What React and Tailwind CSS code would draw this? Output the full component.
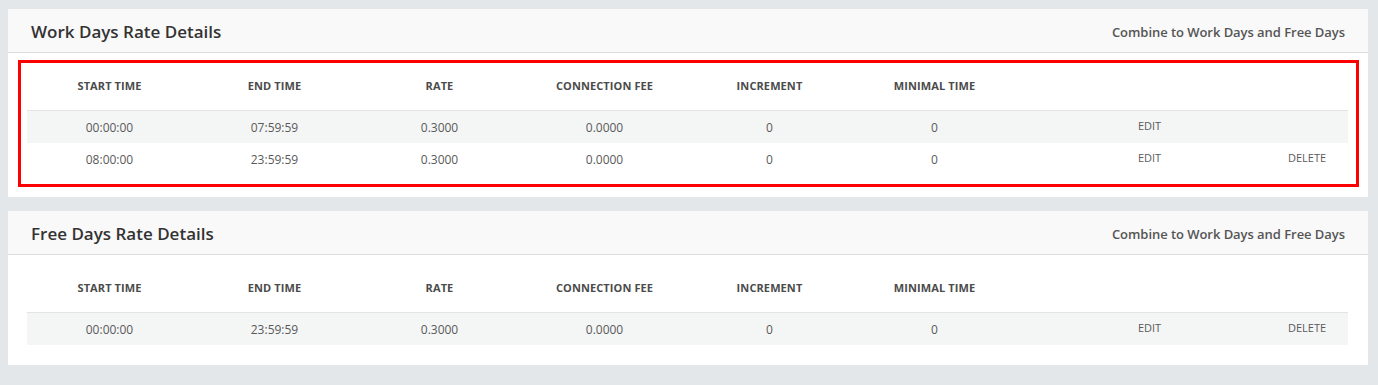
import React from "react";

const cols = ["START TIME", "END TIME", "RATE", "CONNECTION FEE", "INCREMENT", "MINIMAL TIME"];

function Table({ rows }) {
  return (
    <div className="w-full">
      <div className="grid grid-cols-[165px_165px_165px_165px_165px_165px_265px_1fr] h-[48px] items-center border-b border-[#e2e4e5]">
        {cols.map((c) => (
          <div key={c} className="text-center text-[11px] font-bold text-[#4b4b4b] tracking-[0.1px]">
            {c}
          </div>
        ))}
        <div />
        <div />
      </div>
      {rows.map((r, i) => (
        <div
          key={i}
          className={
            "grid grid-cols-[165px_165px_165px_165px_165px_165px_265px_1fr] h-[32px] items-center text-[12px] text-[#5a5a5a] pt-[2px] " +
            (i % 2 === 0 ? "bg-[#f4f5f5]" : "bg-white")
          }
        >
          <div className="text-center">{r[0]}</div>
          <div className="text-center">{r[1]}</div>
          <div className="text-center">{r[2]}</div>
          <div className="text-center">{r[3]}</div>
          <div className="text-center">{r[4]}</div>
          <div className="text-center">{r[5]}</div>
          <div className="text-center text-[11px] -mt-[3px]">EDIT</div>
          <div className="text-center text-[11px] -mt-[3px] pr-[16px]">{r[6] ? "DELETE" : ""}</div>
        </div>
      ))}
    </div>
  );
}

function Card({ title, rows, highlight, bottomPad }) {
  return (
    <div className="bg-white">
      <div className="h-[44px] bg-[#f9f9f9] border-b border-[#dedede] flex items-center justify-between pl-[23px] pr-[23px] pt-[3px]">
        <div className="text-[17px] font-semibold text-[#333] pb-[1px]">{title}</div>
        <div className="text-[13px] font-semibold text-[#555] pt-[1px] tracking-[-0.05px]">Combine to Work Days and Free Days</div>
      </div>
      <div className={"relative pt-[10px] pl-[19px] pr-[20px] " + bottomPad}>
        <Table rows={rows} />
        {highlight && (
          <div className="absolute left-[10px] right-[9px] top-[7px] bottom-[10px] border-[3px] border-[#ff0000] pointer-events-none" />
        )}
      </div>
    </div>
  );
}

export default function App() {
  return (
    <div
      className="w-[1378px] h-[385px] bg-[#e4e7ea] pt-[9px] pl-[8px] pr-[10px] flex flex-col gap-[14px]"
      style={{ fontFamily: '"Open Sans", "Liberation Sans", sans-serif' }}
    >
      <Card
        title="Work Days Rate Details"
        highlight
        bottomPad="pb-[22px]"
        rows={[
          ["00:00:00", "07:59:59", "0.3000", "0.0000", "0", "0", false],
          ["08:00:00", "23:59:59", "0.3000", "0.0000", "0", "0", true],
        ]}
      />
      <Card
        title="Free Days Rate Details"
        bottomPad="pb-[20px]"
        rows={[["00:00:00", "23:59:59", "0.3000", "0.0000", "0", "0", true]]}
      />
    </div>
  );
}
